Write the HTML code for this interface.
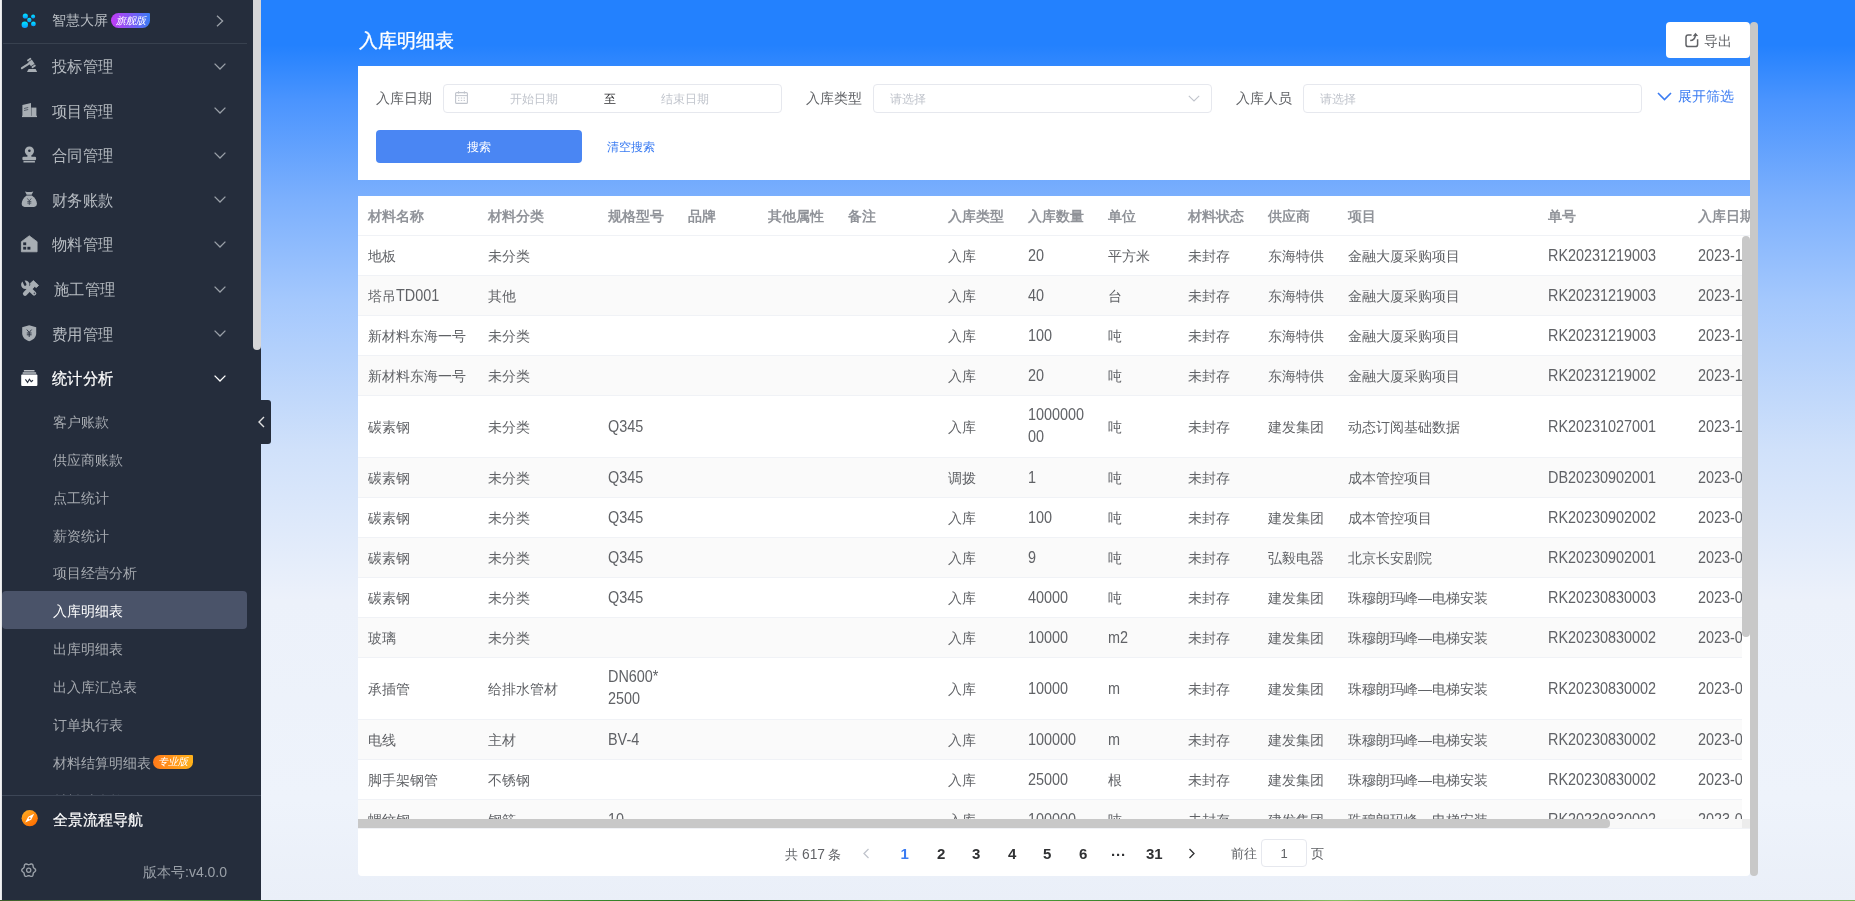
<!DOCTYPE html><html><head><meta charset="utf-8"><style>
*{box-sizing:border-box;margin:0;padding:0}
html,body{width:1855px;height:901px;overflow:hidden;font-family:"Liberation Sans",sans-serif;}
body{position:relative;background:#eef2fa}
.ab{position:absolute;white-space:nowrap}
#leftedge{left:0;top:0;width:2px;height:901px;background:linear-gradient(90deg,#fafafa,#dcdde0)}
#side{left:2px;top:0;width:259px;height:901px;background:#252d3c;overflow:hidden}
#main{left:261px;top:0;width:1594px;height:901px;background:linear-gradient(180deg,#2381fe 0px,#2381fe 45px,#4a94fe 100px,#7cb0fd 200px,#a4c8fd 300px,#d0e1fa 450px,#ecf1fa 600px,#eef3fb 800px,#eaeff8 901px)}
#bottomstrip{left:0;top:900px;width:1855px;height:1px;background:linear-gradient(90deg,#3c5a2a,#6aa848 8%,#2f7a25 16%,#8bc060 24%,#3a8a2c 32%,#1f5a18 40%,#7ab850 48%,#4a9a35 56%,#2a6a20 64%,#8ac060 72%,#3a8a2a 80%,#5aa040 90%,#7ab050)}
.mi{font-size:16px;line-height:16px;color:#b7bcc2;transform:scaleX(0.955);transform-origin:0 50%}
.si{font-size:14px;line-height:14px;color:#a6aab0}
.chev{width:12px;height:7px}
.card{background:#fff}
.lbl{font-size:14px;line-height:14px;color:#606266}
.ph{font-size:12px;line-height:12px;color:#c0c4cc}
.inp{border:1px solid #e6e8ee;border-radius:4px;background:#fff}
.th{font-size:13.9px;line-height:14px;color:#909399;font-weight:bold}
.td{font-size:14px;line-height:14px;color:#606266}
.row{left:0;width:1384px;border-bottom:1px solid #f0f2f6}
.en{font-size:16px;display:inline-block;transform:scaleX(0.9);transform-origin:0 50%;letter-spacing:0px;line-height:14px}
.pg{font-size:15px;line-height:13px;color:#303133;font-weight:bold}
</style></head><body><div id="wrap" style="position:absolute;left:0;top:0;width:1855px;height:901px;overflow:hidden;will-change:transform">
<div class="ab" id="leftedge"></div>
<div class="ab" id="main"></div>
<div class="ab" id="side">
<svg class="ab" style="left:18px;top:10px;width:20px;height:20px" viewBox="20 10 20 20"><defs><linearGradient id="gd" x1="0" y1="0" x2="0" y2="1"><stop offset="0" stop-color="#00eaff"/><stop offset="1" stop-color="#0a98ff"/></linearGradient></defs><g fill="url(#gd)"><circle cx="25.3" cy="16" r="2.6"/><circle cx="33.1" cy="16.5" r="2"/><circle cx="29.3" cy="20" r="2.2"/><circle cx="24.8" cy="24.7" r="3.2"/><circle cx="33.4" cy="23.9" r="2.4"/></g></svg>
<div class="ab mi" style="left:50px;top:13px;font-size:14px;line-height:14px;transform:none">智慧大屏</div>
<div class="ab" style="left:109px;top:13px;width:39px;height:15px;border-radius:8px 1px 8px 8px;background:linear-gradient(90deg,#c23cf5,#7a5cf5 55%,#3a7cf5);"></div>
<div class="ab" style="left:109px;top:14px;width:39px;font-size:10px;line-height:13px;color:#fff;font-style:italic;text-align:center">旗舰版</div>
<svg class="ab" style="left:214px;top:15px;width:8px;height:12px" viewBox="0 0 8 12"><path d="M1 0.8 L6.6 6 L1 11.2" fill="none" stroke="#9aa0a8" stroke-width="1.3"/></svg>
<div class="ab" style="left:1px;top:43px;width:244px;height:1px;background:#38414f"></div>
<svg class="ab" style="left:18px;top:57px;width:20px;height:20px" viewBox="20 57 20 20"><g fill="#a8aeb4"><g transform="rotate(-34 31.4 63)"><rect x="29.2" y="58" width="4.4" height="10" rx="0.6"/></g><path d="M21.9 68.2 L30.2 62.8" stroke="#a8aeb4" stroke-width="2.1" stroke-linecap="round"/><path d="M28.6 69 L35.6 69 L37.1 72 L27 72 Z"/><g transform="rotate(-34 31.4 63)" fill="#252d3c"><rect x="28.6" y="59.8" width="5.6" height="0.7"/><rect x="28.6" y="65.4" width="5.6" height="0.7"/></g></g></svg>
<div class="ab mi" style="left:50px;top:59px;color:#b7bcc2">投标管理</div>
<svg class="ab chev" style="left:212px;top:62.5px" viewBox="0 0 12 7"><path d="M0.6 0.6 L6 6 L11.4 0.6" fill="none" stroke="#9aa0a8" stroke-width="1.3"/></svg>
<svg class="ab" style="left:18px;top:101px;width:20px;height:20px" viewBox="20 101 20 20"><g fill="#a8aeb4"><path d="M22.4 104.9 L31 103 L31 116.6 L22.4 116.6 Z"/><rect x="31.6" y="107.6" width="4.8" height="9"/><rect x="22" y="115.8" width="15" height="1.3"/><path d="M24 108.1 L28.2 107.2 L28.2 107.9 L24 108.8 Z M24 110.1 L28.2 109.2 L28.2 109.9 L24 110.8 Z" fill="#3a4250"/><rect x="31" y="107.6" width="0.6" height="8.5" fill="#8a9097"/></g></svg>
<div class="ab mi" style="left:50px;top:104px;color:#b7bcc2">项目管理</div>
<svg class="ab chev" style="left:212px;top:107.1px" viewBox="0 0 12 7"><path d="M0.6 0.6 L6 6 L11.4 0.6" fill="none" stroke="#9aa0a8" stroke-width="1.3"/></svg>
<svg class="ab" style="left:18px;top:146px;width:20px;height:20px" viewBox="20 146 20 20"><g fill="#a8aeb4"><circle cx="29.4" cy="151" r="4.6"/><rect x="27.4" y="154" width="4" height="3.5"/><rect x="22.4" y="156.7" width="13.7" height="3.5" rx="1.2"/><rect x="23.4" y="160.9" width="11.6" height="1.6" rx="0.5"/><circle cx="29.4" cy="150.8" r="1.3" fill="#252d3c"/></g></svg>
<div class="ab mi" style="left:50px;top:148px;color:#b7bcc2">合同管理</div>
<svg class="ab chev" style="left:212px;top:151.8px" viewBox="0 0 12 7"><path d="M0.6 0.6 L6 6 L11.4 0.6" fill="none" stroke="#9aa0a8" stroke-width="1.3"/></svg>
<svg class="ab" style="left:18px;top:190px;width:20px;height:20px" viewBox="20 190 20 20"><g fill="#a8aeb4"><path d="M25 191.4 Q29.2 192.6 33.3 191.4 L31.6 194.8 L26.7 194.8 Z"/><path d="M26.6 195.6 L31.8 195.6 C35 197.8 36.9 201 36.9 203.6 C36.9 205.8 35.8 206.9 34 206.9 L24.6 206.9 C22.8 206.9 21.7 205.8 21.7 203.6 C21.7 201 23.6 197.8 26.6 195.6 Z"/><path d="M27.3 198.4 L29.3 200.9 L31.3 198.4 M29.3 200.9 L29.3 205 M27.3 201.6 L31.3 201.6 M27.3 203.1 L31.3 203.1" stroke="#3a4250" stroke-width="0.8" fill="none"/></g></svg>
<div class="ab mi" style="left:50px;top:193px;color:#b7bcc2">财务账款</div>
<svg class="ab chev" style="left:212px;top:196.4px" viewBox="0 0 12 7"><path d="M0.6 0.6 L6 6 L11.4 0.6" fill="none" stroke="#9aa0a8" stroke-width="1.3"/></svg>
<svg class="ab" style="left:18px;top:234px;width:20px;height:20px" viewBox="20 234 20 20"><g fill="#a8aeb4"><path d="M21.4 241.7 L29.25 235.8 L37.1 241.7 L37.1 251.8 L21.4 251.8 Z" stroke="#a8aeb4" stroke-width="0.8" stroke-linejoin="round"/><rect x="23.2" y="242.4" width="3" height="2.8" fill="#252d3c"/><rect x="23.2" y="246.8" width="3" height="2.8" fill="#252d3c"/><rect x="27.4" y="246.8" width="3" height="2.8" fill="#252d3c"/></g></svg>
<div class="ab mi" style="left:50px;top:237px;color:#b7bcc2">物料管理</div>
<svg class="ab chev" style="left:212px;top:241.1px" viewBox="0 0 12 7"><path d="M0.6 0.6 L6 6 L11.4 0.6" fill="none" stroke="#9aa0a8" stroke-width="1.3"/></svg>
<svg class="ab" style="left:18px;top:279px;width:20px;height:20px" viewBox="20 279 20 20"><g fill="#a8aeb4"><path d="M26.4 286 L34.2 293.4" stroke="#a8aeb4" stroke-width="4.2" stroke-linecap="round"/><circle cx="25.3" cy="284.8" r="4.2"/><g transform="rotate(-25 25.3 284.8)"><rect x="24.1" y="279" width="2.4" height="5.6" fill="#252d3c"/><circle cx="25.3" cy="284.6" r="1.2" fill="#252d3c"/></g><path d="M32.6 285.8 L25 293.8" stroke="#a8aeb4" stroke-width="4.2" stroke-linecap="round"/><path d="M30.2 283.4 L33.4 280.6 L38.6 285.4 L36.4 287.6 L34.6 286.6 L32.6 288.4 Z" stroke="#a8aeb4" stroke-width="0.8" stroke-linejoin="round"/><circle cx="34.4" cy="293.4" r="0.8" fill="#4a5260"/></g></svg>
<div class="ab mi" style="left:52px;top:282px;color:#b7bcc2">施工管理</div>
<svg class="ab chev" style="left:212px;top:285.7px" viewBox="0 0 12 7"><path d="M0.6 0.6 L6 6 L11.4 0.6" fill="none" stroke="#9aa0a8" stroke-width="1.3"/></svg>
<svg class="ab" style="left:18px;top:323px;width:20px;height:20px" viewBox="20 323 20 20"><g fill="#a8aeb4"><path d="M29.2 325.2 L36.2 327.3 L36.2 333.2 C36.2 337.4 33 340 29.2 341.2 C25.4 340 22.2 337.4 22.2 333.2 L22.2 327.3 Z"/><path d="M26.8 329.6 L29.2 332.4 L31.6 329.6 M29.2 332.4 L29.2 337 M26.8 333 L31.6 333 M26.8 334.8 L31.6 334.8" stroke="#252d3c" stroke-width="0.9" fill="none"/></g></svg>
<div class="ab mi" style="left:50px;top:327px;color:#b7bcc2">费用管理</div>
<svg class="ab chev" style="left:212px;top:330.3px" viewBox="0 0 12 7"><path d="M0.6 0.6 L6 6 L11.4 0.6" fill="none" stroke="#9aa0a8" stroke-width="1.3"/></svg>
<svg class="ab" style="left:18px;top:368px;width:20px;height:20px" viewBox="20 368 20 20"><g fill="#ffffff"><rect x="23.8" y="370" width="10.8" height="1.5" rx="0.5" fill="#bfc3c8"/><rect x="22.6" y="372.2" width="13.6" height="1.5" rx="0.5" fill="#bfc3c8"/><rect x="21.2" y="374.6" width="16.2" height="11.4" rx="1"/><path d="M25.4 379.4 L27.6 382.4 L29.4 379.2 L31.2 381.6 L33 380.2" stroke="#252d3c" stroke-width="1.1" fill="none"/></g></svg>
<div class="ab mi" style="left:50px;top:371px;color:#ffffff;-webkit-text-stroke:0.2px #fff">统计分析</div>
<svg class="ab chev" style="left:212px;top:375.0px" viewBox="0 0 12 7"><path d="M0.6 0.6 L6 6 L11.4 0.6" fill="none" stroke="#ffffff" stroke-width="1.3"/></svg>
<div class="ab" style="left:0px;top:591px;width:245px;height:38px;border-radius:4px;background:#4a5369"></div>
<div class="ab si" style="left:51px;top:414.6px;color:#a6aab0">客户账款</div>
<div class="ab si" style="left:51px;top:452.6px;color:#a6aab0">供应商账款</div>
<div class="ab si" style="left:51px;top:490.5px;color:#a6aab0">点工统计</div>
<div class="ab si" style="left:51px;top:528.5px;color:#a6aab0">薪资统计</div>
<div class="ab si" style="left:51px;top:566.4px;color:#a6aab0">项目经营分析</div>
<div class="ab si" style="left:51px;top:604.4px;color:#ffffff">入库明细表</div>
<div class="ab si" style="left:51px;top:642.4px;color:#a6aab0">出库明细表</div>
<div class="ab si" style="left:51px;top:680.3px;color:#a6aab0">出入库汇总表</div>
<div class="ab si" style="left:51px;top:718.3px;color:#a6aab0">订单执行表</div>
<div class="ab si" style="left:51px;top:756.2px;color:#a6aab0">材料结算明细表</div>
<div class="ab si" style="left:51px;top:794.2px;color:#a6aab0">材料对账单</div>
<div class="ab" style="left:151px;top:755px;width:40px;height:14px;border-radius:7px 1px 7px 7px;background:linear-gradient(90deg,#ff7a1a,#ffb21a)"></div>
<div class="ab" style="left:151px;top:756px;width:40px;font-size:10px;line-height:12px;color:#fff;font-style:italic;text-align:center">专业版</div>
<div class="ab" style="left:0;top:795px;width:259px;height:106px;background:#252d3c;border-top:1px solid #3d4656"></div>
<svg class="ab" style="left:18px;top:808px;width:20px;height:20px" viewBox="20 808 20 20"><defs><linearGradient id="go" x1="0" y1="0" x2="0.7" y2="1"><stop offset="0" stop-color="#ffb224"/><stop offset="1" stop-color="#ff6e00"/></linearGradient></defs><circle cx="29.7" cy="818.2" r="8.1" fill="url(#go)"/><path d="M25.2 822.6 L31.2 819.7 L34.2 813.8 L28.2 816.7 Z" fill="#fff"/><circle cx="29.6" cy="818.2" r="1" fill="#ff8c14"/></svg>
<div class="ab" style="left:51px;top:812px;font-size:15px;line-height:15px;color:#fff;-webkit-text-stroke:0.2px #fff">全景流程导航</div>
<svg class="ab" style="left:18px;top:860px;width:20px;height:20px" viewBox="20 860 20 20"><path d="M35.65 870.20 L35.52 870.80 L35.18 871.34 L34.69 871.80 L34.17 872.19 L33.73 872.55 L33.42 872.93 L33.25 873.38 L33.16 873.94 L33.08 874.58 L32.93 875.24 L32.63 875.81 L32.17 876.22 L31.59 876.41 L30.95 876.38 L30.30 876.19 L29.71 875.94 L29.18 875.73 L28.70 875.65 L28.22 875.73 L27.69 875.94 L27.10 876.19 L26.45 876.38 L25.81 876.41 L25.23 876.22 L24.77 875.81 L24.47 875.24 L24.32 874.58 L24.24 873.94 L24.15 873.38 L23.98 872.93 L23.67 872.55 L23.23 872.19 L22.71 871.80 L22.22 871.34 L21.88 870.80 L21.75 870.20 L21.88 869.60 L22.22 869.06 L22.71 868.60 L23.23 868.21 L23.67 867.85 L23.98 867.48 L24.15 867.02 L24.24 866.46 L24.32 865.82 L24.47 865.16 L24.77 864.59 L25.22 864.18 L25.81 863.99 L26.45 864.02 L27.10 864.21 L27.69 864.46 L28.22 864.67 L28.70 864.75 L29.18 864.67 L29.71 864.46 L30.30 864.21 L30.95 864.02 L31.59 863.99 L32.17 864.18 L32.63 864.59 L32.93 865.16 L33.08 865.82 L33.16 866.46 L33.25 867.02 L33.42 867.48 L33.73 867.85 L34.17 868.21 L34.69 868.60 L35.18 869.06 L35.52 869.60 Z" fill="none" stroke="#9aa0a8" stroke-width="1.4" stroke-linejoin="round"/><circle cx="28.7" cy="870.2" r="2.1" fill="none" stroke="#9aa0a8" stroke-width="1.3"/></svg>
<div class="ab" style="left:141px;top:865px;font-size:14px;line-height:14px;color:#9aa0a8">版本号:v4.0.0</div>
<div class="ab" style="left:251px;top:0px;width:8px;height:350px;border-radius:0 0 4px 4px;background:#d6d6d8"></div>
</div>
<div class="ab" style="left:261px;top:400px;width:10px;height:44px;border-radius:0 3px 3px 0;background:#252d3c"></div>
<svg class="ab" style="left:256px;top:416px;width:10px;height:12px" viewBox="0 0 10 12"><path d="M8 1 L3 6 L8 11" fill="none" stroke="#e0e0e0" stroke-width="1.4"/></svg>
<div class="ab" style="left:359px;top:30px;font-size:19.4px;line-height:20px;color:#fff;-webkit-text-stroke:0.35px #fff">入库明细表</div>
<div class="ab" style="left:1666px;top:22px;width:84px;height:36px;background:#fff;border-radius:4px"></div>
<svg class="ab" style="left:1680px;top:28px;width:24px;height:24px" viewBox="1680 28 24 24"><path d="M1691.6 35 L1688.2 35 Q1686 35 1686 37.2 L1686 44.4 Q1686 46.6 1688.2 46.6 L1695.4 46.6 Q1697.6 46.6 1697.6 44.4 L1697.6 39.2" fill="none" stroke="#606266" stroke-width="1.5"/><path d="M1690.2 40.6 Q1694.8 40.4 1695.4 35.4" fill="none" stroke="#606266" stroke-width="1.5"/><path d="M1692.7 36.3 L1695.5 32.7 L1698.1 36.1 Z" fill="#606266"/></svg>
<div class="ab lbl" style="left:1704px;top:34px">导出</div>
<div class="ab card" style="left:358px;top:66px;width:1392px;height:114px"></div>
<div class="ab lbl" style="left:376px;top:91px">入库日期</div>
<div class="ab inp" style="left:443px;top:84px;width:339px;height:29px"></div>
<svg class="ab" style="left:455px;top:91px;width:13px;height:13px" viewBox="0 0 13 13"><rect x="0.6" y="1.6" width="11.8" height="10.8" rx="1" fill="none" stroke="#c0c4cc" stroke-width="1.1"/><path d="M0.6 4.6 L12.4 4.6 M3.6 0.2 L3.6 2.6 M9.4 0.2 L9.4 2.6 M3 7 L4.4 7 M5.8 7 L7.2 7 M8.6 7 L10 7 M3 9.4 L4.4 9.4 M5.8 9.4 L7.2 9.4 M8.6 9.4 L10 9.4" stroke="#c0c4cc" stroke-width="1"/></svg>
<div class="ab ph" style="left:510px;top:93px">开始日期</div>
<div class="ab ph" style="left:604px;top:93px;color:#303133">至</div>
<div class="ab ph" style="left:661px;top:93px">结束日期</div>
<div class="ab lbl" style="left:806px;top:91px">入库类型</div>
<div class="ab inp" style="left:873px;top:84px;width:339px;height:29px"></div>
<div class="ab ph" style="left:890px;top:93px">请选择</div>
<svg class="ab" style="left:1188px;top:95px;width:12px;height:7px" viewBox="0 0 12 7"><path d="M0.8 0.8 L6 6 L11.2 0.8" fill="none" stroke="#c0c4cc" stroke-width="1.1"/></svg>
<div class="ab lbl" style="left:1236px;top:91px">入库人员</div>
<div class="ab inp" style="left:1303px;top:84px;width:339px;height:29px"></div>
<div class="ab ph" style="left:1320px;top:93px">请选择</div>
<svg class="ab" style="left:1657px;top:92px;width:15px;height:9px" viewBox="0 0 15 9"><path d="M1 1 L7.5 7.6 L14 1" fill="none" stroke="#3b7cf2" stroke-width="1.6"/></svg>
<div class="ab lbl" style="left:1678px;top:89px;color:#3b7cf2">展开筛选</div>
<div class="ab" style="left:376px;top:130px;width:206px;height:33px;border-radius:4px;background:#4a86f3"></div>
<div class="ab" style="left:376px;top:141px;width:206px;text-align:center;font-size:12px;line-height:12px;color:#fff">搜索</div>
<div class="ab" style="left:607px;top:141px;font-size:12px;line-height:12px;color:#3b7cf2">清空搜索</div>
<div class="ab card" style="left:358px;top:196px;width:1392px;height:680px;border-radius:0 0 4px 4px"></div>
<div class="ab" style="left:358px;top:196px;width:1392px;height:40px;overflow:hidden">
<div class="ab" style="left:0;top:0;width:1392px;height:40px;border-bottom:1px solid #f0f2f6"></div>
<div class="ab th" style="left:10px;top:13px">材料名称</div>
<div class="ab th" style="left:130px;top:13px">材料分类</div>
<div class="ab th" style="left:250px;top:13px">规格型号</div>
<div class="ab th" style="left:330px;top:13px">品牌</div>
<div class="ab th" style="left:410px;top:13px">其他属性</div>
<div class="ab th" style="left:490px;top:13px">备注</div>
<div class="ab th" style="left:590px;top:13px">入库类型</div>
<div class="ab th" style="left:670px;top:13px">入库数量</div>
<div class="ab th" style="left:750px;top:13px">单位</div>
<div class="ab th" style="left:830px;top:13px">材料状态</div>
<div class="ab th" style="left:910px;top:13px">供应商</div>
<div class="ab th" style="left:990px;top:13px">项目</div>
<div class="ab th" style="left:1190px;top:13px">单号</div>
<div class="ab th" style="left:1340px;top:13px">入库日期</div>
</div>
<div class="ab" style="left:358px;top:196px;width:1384px;height:623px;overflow:hidden">
<div class="ab row" style="top:40px;height:40px;background:#ffffff"></div>
<div class="ab td" style="left:10px;top:53px">地板</div>
<div class="ab td" style="left:130px;top:53px">未分类</div>
<div class="ab td" style="left:590px;top:53px">入库</div>
<div class="ab td" style="left:670px;top:53px"><span class="en">20</span></div>
<div class="ab td" style="left:750px;top:53px">平方米</div>
<div class="ab td" style="left:830px;top:53px">未封存</div>
<div class="ab td" style="left:910px;top:53px">东海特供</div>
<div class="ab td" style="left:990px;top:53px">金融大厦采购项目</div>
<div class="ab td" style="left:1190px;top:53px"><span class="en">RK20231219003</span></div>
<div class="ab td" style="left:1340px;top:53px"><span class="en">2023-12-19</span></div>
<div class="ab row" style="top:80px;height:40px;background:#fafafa"></div>
<div class="ab td" style="left:10px;top:93px">塔吊<span class="en">TD001</span></div>
<div class="ab td" style="left:130px;top:93px">其他</div>
<div class="ab td" style="left:590px;top:93px">入库</div>
<div class="ab td" style="left:670px;top:93px"><span class="en">40</span></div>
<div class="ab td" style="left:750px;top:93px">台</div>
<div class="ab td" style="left:830px;top:93px">未封存</div>
<div class="ab td" style="left:910px;top:93px">东海特供</div>
<div class="ab td" style="left:990px;top:93px">金融大厦采购项目</div>
<div class="ab td" style="left:1190px;top:93px"><span class="en">RK20231219003</span></div>
<div class="ab td" style="left:1340px;top:93px"><span class="en">2023-12-19</span></div>
<div class="ab row" style="top:120px;height:40px;background:#ffffff"></div>
<div class="ab td" style="left:10px;top:133px">新材料东海一号</div>
<div class="ab td" style="left:130px;top:133px">未分类</div>
<div class="ab td" style="left:590px;top:133px">入库</div>
<div class="ab td" style="left:670px;top:133px"><span class="en">100</span></div>
<div class="ab td" style="left:750px;top:133px">吨</div>
<div class="ab td" style="left:830px;top:133px">未封存</div>
<div class="ab td" style="left:910px;top:133px">东海特供</div>
<div class="ab td" style="left:990px;top:133px">金融大厦采购项目</div>
<div class="ab td" style="left:1190px;top:133px"><span class="en">RK20231219003</span></div>
<div class="ab td" style="left:1340px;top:133px"><span class="en">2023-12-19</span></div>
<div class="ab row" style="top:160px;height:40px;background:#fafafa"></div>
<div class="ab td" style="left:10px;top:173px">新材料东海一号</div>
<div class="ab td" style="left:130px;top:173px">未分类</div>
<div class="ab td" style="left:590px;top:173px">入库</div>
<div class="ab td" style="left:670px;top:173px"><span class="en">20</span></div>
<div class="ab td" style="left:750px;top:173px">吨</div>
<div class="ab td" style="left:830px;top:173px">未封存</div>
<div class="ab td" style="left:910px;top:173px">东海特供</div>
<div class="ab td" style="left:990px;top:173px">金融大厦采购项目</div>
<div class="ab td" style="left:1190px;top:173px"><span class="en">RK20231219002</span></div>
<div class="ab td" style="left:1340px;top:173px"><span class="en">2023-12-19</span></div>
<div class="ab row" style="top:200px;height:62px;background:#ffffff"></div>
<div class="ab td" style="left:10px;top:224px">碳素钢</div>
<div class="ab td" style="left:130px;top:224px">未分类</div>
<div class="ab td" style="left:250px;top:224px"><span class="en">Q345</span></div>
<div class="ab td" style="left:590px;top:224px">入库</div>
<div class="ab td" style="left:670px;top:208px;line-height:22px"><span class="en">1000000</span><br><span class="en">00</span></div>
<div class="ab td" style="left:750px;top:224px">吨</div>
<div class="ab td" style="left:830px;top:224px">未封存</div>
<div class="ab td" style="left:910px;top:224px">建发集团</div>
<div class="ab td" style="left:990px;top:224px">动态订阅基础数据</div>
<div class="ab td" style="left:1190px;top:224px"><span class="en">RK20231027001</span></div>
<div class="ab td" style="left:1340px;top:224px"><span class="en">2023-10-27</span></div>
<div class="ab row" style="top:262px;height:40px;background:#fafafa"></div>
<div class="ab td" style="left:10px;top:275px">碳素钢</div>
<div class="ab td" style="left:130px;top:275px">未分类</div>
<div class="ab td" style="left:250px;top:275px"><span class="en">Q345</span></div>
<div class="ab td" style="left:590px;top:275px">调拨</div>
<div class="ab td" style="left:670px;top:275px"><span class="en">1</span></div>
<div class="ab td" style="left:750px;top:275px">吨</div>
<div class="ab td" style="left:830px;top:275px">未封存</div>
<div class="ab td" style="left:990px;top:275px">成本管控项目</div>
<div class="ab td" style="left:1190px;top:275px"><span class="en">DB20230902001</span></div>
<div class="ab td" style="left:1340px;top:275px"><span class="en">2023-09-02</span></div>
<div class="ab row" style="top:302px;height:40px;background:#ffffff"></div>
<div class="ab td" style="left:10px;top:315px">碳素钢</div>
<div class="ab td" style="left:130px;top:315px">未分类</div>
<div class="ab td" style="left:250px;top:315px"><span class="en">Q345</span></div>
<div class="ab td" style="left:590px;top:315px">入库</div>
<div class="ab td" style="left:670px;top:315px"><span class="en">100</span></div>
<div class="ab td" style="left:750px;top:315px">吨</div>
<div class="ab td" style="left:830px;top:315px">未封存</div>
<div class="ab td" style="left:910px;top:315px">建发集团</div>
<div class="ab td" style="left:990px;top:315px">成本管控项目</div>
<div class="ab td" style="left:1190px;top:315px"><span class="en">RK20230902002</span></div>
<div class="ab td" style="left:1340px;top:315px"><span class="en">2023-09-02</span></div>
<div class="ab row" style="top:342px;height:40px;background:#fafafa"></div>
<div class="ab td" style="left:10px;top:355px">碳素钢</div>
<div class="ab td" style="left:130px;top:355px">未分类</div>
<div class="ab td" style="left:250px;top:355px"><span class="en">Q345</span></div>
<div class="ab td" style="left:590px;top:355px">入库</div>
<div class="ab td" style="left:670px;top:355px"><span class="en">9</span></div>
<div class="ab td" style="left:750px;top:355px">吨</div>
<div class="ab td" style="left:830px;top:355px">未封存</div>
<div class="ab td" style="left:910px;top:355px">弘毅电器</div>
<div class="ab td" style="left:990px;top:355px">北京长安剧院</div>
<div class="ab td" style="left:1190px;top:355px"><span class="en">RK20230902001</span></div>
<div class="ab td" style="left:1340px;top:355px"><span class="en">2023-09-02</span></div>
<div class="ab row" style="top:382px;height:40px;background:#ffffff"></div>
<div class="ab td" style="left:10px;top:395px">碳素钢</div>
<div class="ab td" style="left:130px;top:395px">未分类</div>
<div class="ab td" style="left:250px;top:395px"><span class="en">Q345</span></div>
<div class="ab td" style="left:590px;top:395px">入库</div>
<div class="ab td" style="left:670px;top:395px"><span class="en">40000</span></div>
<div class="ab td" style="left:750px;top:395px">吨</div>
<div class="ab td" style="left:830px;top:395px">未封存</div>
<div class="ab td" style="left:910px;top:395px">建发集团</div>
<div class="ab td" style="left:990px;top:395px">珠穆朗玛峰—电梯安装</div>
<div class="ab td" style="left:1190px;top:395px"><span class="en">RK20230830003</span></div>
<div class="ab td" style="left:1340px;top:395px"><span class="en">2023-08-30</span></div>
<div class="ab row" style="top:422px;height:40px;background:#fafafa"></div>
<div class="ab td" style="left:10px;top:435px">玻璃</div>
<div class="ab td" style="left:130px;top:435px">未分类</div>
<div class="ab td" style="left:590px;top:435px">入库</div>
<div class="ab td" style="left:670px;top:435px"><span class="en">10000</span></div>
<div class="ab td" style="left:750px;top:435px"><span class="en">m2</span></div>
<div class="ab td" style="left:830px;top:435px">未封存</div>
<div class="ab td" style="left:910px;top:435px">建发集团</div>
<div class="ab td" style="left:990px;top:435px">珠穆朗玛峰—电梯安装</div>
<div class="ab td" style="left:1190px;top:435px"><span class="en">RK20230830002</span></div>
<div class="ab td" style="left:1340px;top:435px"><span class="en">2023-08-30</span></div>
<div class="ab row" style="top:462px;height:62px;background:#ffffff"></div>
<div class="ab td" style="left:10px;top:486px">承插管</div>
<div class="ab td" style="left:130px;top:486px">给排水管材</div>
<div class="ab td" style="left:250px;top:470px;line-height:22px"><span class="en">DN600*</span><br><span class="en">2500</span></div>
<div class="ab td" style="left:590px;top:486px">入库</div>
<div class="ab td" style="left:670px;top:486px"><span class="en">10000</span></div>
<div class="ab td" style="left:750px;top:486px"><span class="en">m</span></div>
<div class="ab td" style="left:830px;top:486px">未封存</div>
<div class="ab td" style="left:910px;top:486px">建发集团</div>
<div class="ab td" style="left:990px;top:486px">珠穆朗玛峰—电梯安装</div>
<div class="ab td" style="left:1190px;top:486px"><span class="en">RK20230830002</span></div>
<div class="ab td" style="left:1340px;top:486px"><span class="en">2023-08-30</span></div>
<div class="ab row" style="top:524px;height:40px;background:#fafafa"></div>
<div class="ab td" style="left:10px;top:537px">电线</div>
<div class="ab td" style="left:130px;top:537px">主材</div>
<div class="ab td" style="left:250px;top:537px"><span class="en">BV-4</span></div>
<div class="ab td" style="left:590px;top:537px">入库</div>
<div class="ab td" style="left:670px;top:537px"><span class="en">100000</span></div>
<div class="ab td" style="left:750px;top:537px"><span class="en">m</span></div>
<div class="ab td" style="left:830px;top:537px">未封存</div>
<div class="ab td" style="left:910px;top:537px">建发集团</div>
<div class="ab td" style="left:990px;top:537px">珠穆朗玛峰—电梯安装</div>
<div class="ab td" style="left:1190px;top:537px"><span class="en">RK20230830002</span></div>
<div class="ab td" style="left:1340px;top:537px"><span class="en">2023-08-30</span></div>
<div class="ab row" style="top:564px;height:40px;background:#ffffff"></div>
<div class="ab td" style="left:10px;top:577px">脚手架钢管</div>
<div class="ab td" style="left:130px;top:577px">不锈钢</div>
<div class="ab td" style="left:590px;top:577px">入库</div>
<div class="ab td" style="left:670px;top:577px"><span class="en">25000</span></div>
<div class="ab td" style="left:750px;top:577px">根</div>
<div class="ab td" style="left:830px;top:577px">未封存</div>
<div class="ab td" style="left:910px;top:577px">建发集团</div>
<div class="ab td" style="left:990px;top:577px">珠穆朗玛峰—电梯安装</div>
<div class="ab td" style="left:1190px;top:577px"><span class="en">RK20230830002</span></div>
<div class="ab td" style="left:1340px;top:577px"><span class="en">2023-08-30</span></div>
<div class="ab row" style="top:604px;height:40px;background:#fafafa"></div>
<div class="ab td" style="left:10px;top:617px">螺纹钢</div>
<div class="ab td" style="left:130px;top:617px">钢筋</div>
<div class="ab td" style="left:250px;top:617px"><span class="en">10</span></div>
<div class="ab td" style="left:590px;top:617px">入库</div>
<div class="ab td" style="left:670px;top:617px"><span class="en">100000</span></div>
<div class="ab td" style="left:750px;top:617px">吨</div>
<div class="ab td" style="left:830px;top:617px">未封存</div>
<div class="ab td" style="left:910px;top:617px">建发集团</div>
<div class="ab td" style="left:990px;top:617px">珠穆朗玛峰—电梯安装</div>
<div class="ab td" style="left:1190px;top:617px"><span class="en">RK20230830002</span></div>
<div class="ab td" style="left:1340px;top:617px"><span class="en">2023-08-30</span></div>
</div>
<div class="ab" style="left:358px;top:819px;width:1392px;height:10px;background:#f8f8f8;border-bottom:1px solid #f0f2f6"></div>
<div class="ab" style="left:358px;top:819px;width:1252px;height:9px;border-radius:0 4px 4px 0;background:#c8c8c8"></div>
<div class="ab" style="left:1742px;top:819px;width:8px;height:9px;background:#ececec"></div>
<div class="ab" style="left:1742px;top:236px;width:8px;height:583px;background:#fff"></div>
<div class="ab" style="left:1742px;top:236px;width:8px;height:401px;border-radius:4px 4px 4px 4px;background:#c8c8c8"></div>
<div class="ab" style="left:1750px;top:22px;width:8px;height:854px;border-radius:4px;background:#c8c8c8"></div>
<div class="ab" style="left:785px;top:847px;font-size:13px;line-height:13px;color:#606266">共 <span style="font-size:15px;display:inline-block;transform:scaleX(0.92);transform-origin:0 50%;margin-right:-2px">617</span> 条</div>
<svg class="ab" style="left:862px;top:848px;width:8px;height:11px" viewBox="0 0 8 11"><path d="M6.5 1 L2 5.5 L6.5 10" fill="none" stroke="#c0c4cc" stroke-width="1.3"/></svg>
<div class="ab pg" style="left:900.5px;top:847px;color:#3b7cf2">1</div>
<div class="ab pg" style="left:937px;top:847px;color:#303133">2</div>
<div class="ab pg" style="left:972px;top:847px;color:#303133">3</div>
<div class="ab pg" style="left:1008px;top:847px;color:#303133">4</div>
<div class="ab pg" style="left:1043px;top:847px;color:#303133">5</div>
<div class="ab pg" style="left:1079px;top:847px;color:#303133">6</div>
<div class="ab pg" style="left:1146px;top:847px;color:#303133">31</div>
<div class="ab pg" style="left:1111px;top:848px">···</div>
<svg class="ab" style="left:1188px;top:848px;width:8px;height:11px" viewBox="0 0 8 11"><path d="M1.5 1 L6 5.5 L1.5 10" fill="none" stroke="#303133" stroke-width="1.3"/></svg>
<div class="ab" style="left:1231px;top:847px;font-size:13px;line-height:13px;color:#606266">前往</div>
<div class="ab inp" style="left:1261px;top:839px;width:46px;height:28px"></div>
<div class="ab" style="left:1261px;top:847px;width:46px;text-align:center;font-size:13px;line-height:13px;color:#606266">1</div>
<div class="ab" style="left:1311px;top:847px;font-size:13px;line-height:13px;color:#606266">页</div>
<div class="ab" id="bottomstrip"></div>
</div></body></html>
